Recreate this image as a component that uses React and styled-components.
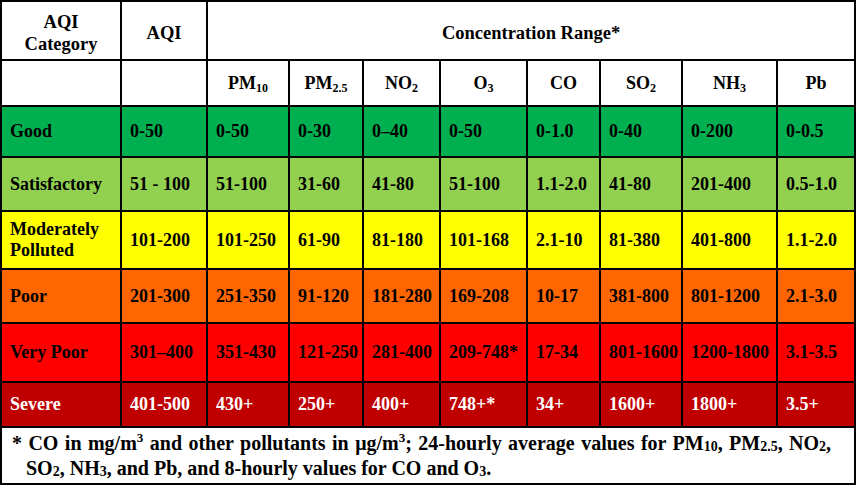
import React from "react";
import styled, { createGlobalStyle } from "styled-components";

const SERIF = `"Liberation Serif", Tinos, "Times New Roman", Times, serif`;

const GlobalStyle = createGlobalStyle`
  html, body {
    margin: 0;
    padding: 0;
    background: #ffffff;
  }
  body {
    font-family: ${SERIF};
  }
`;

const COLUMNS = [120, 86, 82, 74, 77, 87, 73, 82, 95, 78];

const POLLUTANTS = [
  { name: "PM", sub: "10" },
  { name: "PM", sub: "2.5" },
  { name: "NO", sub: "2" },
  { name: "O", sub: "3" },
  { name: "CO" },
  { name: "SO", sub: "2" },
  { name: "NH", sub: "3" },
  { name: "Pb" },
];

const ROWS = [
  {
    label: "Good",
    bg: "#00b050",
    height: 51,
    values: ["0-50", "0-50", "0-30", "0–40", "0-50", "0-1.0", "0-40", "0-200", "0-0.5"],
  },
  {
    label: "Satisfactory",
    bg: "#92d050",
    height: 54,
    values: ["51 - 100", "51-100", "31-60", "41-80", "51-100", "1.1-2.0", "41-80", "201-400", "0.5-1.0"],
  },
  {
    label: "Moderately Polluted",
    bg: "#ffff00",
    height: 58,
    values: ["101-200", "101-250", "61-90", "81-180", "101-168", "2.1-10", "81-380", "401-800", "1.1-2.0"],
  },
  {
    label: "Poor",
    bg: "#ff6600",
    height: 54,
    values: ["201-300", "251-350", "91-120", "181-280", "169-208", "10-17", "381-800", "801-1200", "2.1-3.0"],
  },
  {
    label: "Very Poor",
    bg: "#ff0000",
    height: 59,
    values: ["301–400", "351-430", "121-250", "281-400", "209-748*", "17-34", "801-1600", "1200-1800", "3.1-3.5"],
  },
  {
    label: "Severe",
    bg: "#c00000",
    fg: "#ffffff",
    height: 45,
    values: ["401-500", "430+", "250+", "400+", "748+*", "34+", "1600+", "1800+", "3.5+"],
  },
];

const App = () => {
  return (
    <>
      <GlobalStyle />
      <Table>
        <colgroup>
          {COLUMNS.map((w, i) => (
            <col key={i} style={{ width: w }} />
          ))}
        </colgroup>
        <tbody>
          <Row $height={59}>
            <TitleCell>
              AQI
              <br />
              Category
            </TitleCell>
            <TitleCell>AQI</TitleCell>
            <TitleCell colSpan={8}>Concentration Range*</TitleCell>
          </Row>
          <Row $height={46}>
            <HeadCell />
            <HeadCell />
            {POLLUTANTS.map((p, i) => (
              <HeadCell key={i}>
                {p.name}
                {p.sub && <Sub>{p.sub}</Sub>}
              </HeadCell>
            ))}
          </Row>
          {ROWS.map((row) => (
            <Row key={row.label} $height={row.height}>
              <Cell $bg={row.bg} $fg={row.fg}>
                {row.label === "Moderately Polluted" ? (
                  <>
                    Moderately
                    <br />
                    Polluted
                  </>
                ) : (
                  row.label
                )}
              </Cell>
              {row.values.map((v, i) => (
                <Cell key={i} $bg={row.bg} $fg={row.fg}>
                  {v}
                </Cell>
              ))}
            </Row>
          ))}
          <Row $height={57}>
            <NoteCell colSpan={10}>
              <NoteFirst>
                * CO in mg/m<Sup>3</Sup> and other pollutants in μg/m<Sup>3</Sup>; 24-hourly average values
                for PM<NoteSub>10</NoteSub>, PM<NoteSub>2.5</NoteSub>, NO<NoteSub>2</NoteSub>,
              </NoteFirst>
              <NoteRest>
                SO<NoteSub>2</NoteSub>, NH<NoteSub>3</NoteSub>, and Pb, and 8-hourly values for CO and O
                <NoteSub>3</NoteSub>.
              </NoteRest>
            </NoteCell>
          </Row>
        </tbody>
      </Table>
    </>
  );
};

const Table = styled.table`
  width: 856px;
  border-collapse: collapse;
  table-layout: fixed;
  font-family: ${SERIF};
  font-weight: 700;
  font-size: 18px;
  color: #000000;
`;

const Row = styled.tr`
  height: ${({ $height }) => $height}px;
`;

const HeadCell = styled.td`
  border: 2px solid #000000;
  background: #ffffff;
  text-align: center;
  vertical-align: middle;
  line-height: 22px;
  padding: 0 4px;
`;

const TitleCell = styled(HeadCell)`
  font-size: 18.5px;
  padding-top: 4px;
`;

const Cell = styled.td`
  border: 2px solid #000000;
  background: ${({ $bg }) => $bg};
  color: ${({ $fg }) => $fg || "#000000"};
  text-align: left;
  vertical-align: middle;
  line-height: 21px;
  padding: 0 0 0 8px;
  white-space: nowrap;
`;

const Sub = styled.sub`
  font-size: 12px;
  line-height: 0;
  vertical-align: -3px;
`;

const Sup = styled.sup`
  font-size: 13px;
  line-height: 0;
  vertical-align: 8px;
`;

const NoteSub = styled.span`
  font-size: 14px;
  line-height: 0;
  vertical-align: -1px;
`;

const NoteCell = styled.td`
  border: 2px solid #000000;
  background: #ffffff;
  vertical-align: middle;
  font-size: 20px;
  padding: 1px 23px 0 10px;
`;

const NoteFirst = styled.div`
  height: 25px;
  line-height: 25px;
  overflow: hidden;
  text-align: justify;
  text-align-last: justify;
`;

const NoteRest = styled.div`
  height: 25px;
  line-height: 25px;
  margin-left: 14px;
  white-space: nowrap;
`;

export default App;
